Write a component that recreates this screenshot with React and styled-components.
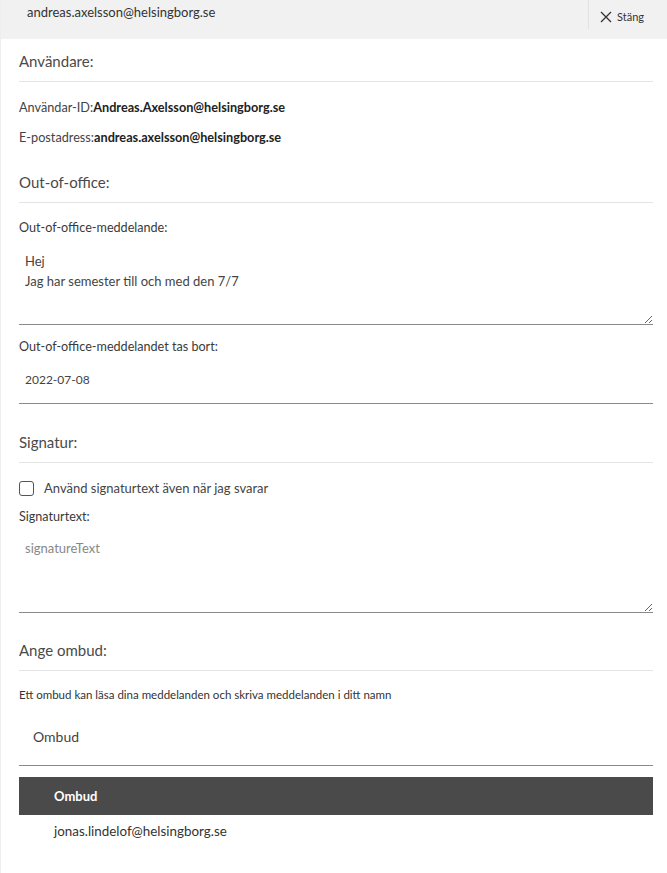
import React from "react";
import styled, { createGlobalStyle } from "styled-components";

const GlobalStyle = createGlobalStyle`
  body {
    margin: 0;
    background: #fff;
    font-family: Lato, "Open Sans", sans-serif;
    color: #333;
  }
  * { box-sizing: border-box; }
`;

const Panel = styled.div`
  width: 667px;
  min-height: 873px;
  background: #fff;
  border-left: 1px solid #eee;
`;

const Header = styled.div`
  height: 39px;
  background: #f1f1f1;
  display: flex;
  align-items: flex-start;
  justify-content: space-between;
`;

const HeaderTitle = styled.div`
  padding: 4px 0 0 26px;
  font-size: 13px;
  color: #333;
`;

const CloseButton = styled.button`
  height: 29px;
  width: 79px;
  border: none;
  border-left: 1px solid #e2e2e2;
  background: transparent;
  display: flex;
  align-items: center;
  gap: 5px;
  padding: 4px 0 0 11px;
  font-family: inherit;
  font-size: 11px;
  color: #333;
  cursor: pointer;
`;

const Body = styled.div`
  padding: 13px 14px 20px 18px;
  display: flex;
  flex-direction: column;
`;

const SectionTitle = styled.div`
  font-size: 15px;
  font-weight: 400;
  color: #4a4a4a;
  padding: ${(p) => p.$top || 0}px 0 11px;
  border-bottom: 1px solid #e3e3e3;
`;

const InfoRow = styled.div`
  font-size: 12.7px;
  color: #444;
  margin-top: ${(p) => p.$top}px;
  b {
    font-weight: 700;
    color: #222;
  }
`;

const Label = styled.div`
  font-size: 12.6px;
  color: #3a3a3a;
  margin-top: ${(p) => p.$top}px;
`;

const TextArea = styled.textarea`
  display: block;
  width: 100%;
  height: ${(p) => p.$height}px;
  margin-top: ${(p) => p.$top}px;
  border: none;
  border-bottom: 1px solid #8a8a8a;
  padding: 8px 6px;
  font-family: inherit;
  font-size: 13px;
  line-height: 20px;
  color: #444;
  outline: none;
  resize: vertical;
  &::placeholder {
    color: #888;
  }
`;

const Input = styled.input`
  display: block;
  width: 100%;
  height: ${(p) => p.$height}px;
  margin-top: ${(p) => p.$top}px;
  border: none;
  border-bottom: 1px solid #8a8a8a;
  padding: 0 ${(p) => p.$pad}px;
  font-family: inherit;
  font-size: ${(p) => p.$size}px;
  color: #444;
  outline: none;
  &::placeholder {
    color: #444;
  }
`;

const CheckRow = styled.label`
  display: flex;
  align-items: center;
  gap: 10px;
  margin-top: 17px;
  font-size: 13px;
  color: #444;
`;

const Box = styled.span`
  width: 15px;
  height: 15px;
  border: 1px solid #555;
  border-radius: 3px;
  background: #fff;
`;

const Hint = styled.div`
  font-size: 11.5px;
  color: #333;
  margin-top: 17px;
`;

const Table = styled.div`
  margin-top: 11px;
`;

const TableHead = styled.div`
  height: 38px;
  background: #4a4a4a;
  color: #fff;
  font-weight: 700;
  font-size: 13px;
  display: flex;
  align-items: center;
  padding-left: 35px;
`;

const TableRow = styled.div`
  padding: 8px 0 0 35px;
  font-size: 13.4px;
  color: #333;
`;

const CloseIcon = () => (
  <svg width="12" height="12" viewBox="0 0 12 12">
    <path d="M1 1L11 11M11 1L1 11" stroke="#333" strokeWidth="1.3" fill="none" />
  </svg>
);

export default function App() {
  return (
    <>
      <GlobalStyle />
      <Panel>
        <Header>
          <HeaderTitle>andreas.axelsson@helsingborg.se</HeaderTitle>
          <CloseButton>
            <CloseIcon />
            Stäng
          </CloseButton>
        </Header>
        <Body>
          <SectionTitle>Användare:</SectionTitle>
          <InfoRow $top={17}>
            Användar-ID:<b>Andreas.Axelsson@helsingborg.se</b>
          </InfoRow>
          <InfoRow $top={14}>
            E-postadress:<b>andreas.axelsson@helsingborg.se</b>
          </InfoRow>

          <SectionTitle $top={28}>Out-of-office:</SectionTitle>
          <Label $top={17}>Out-of-office-meddelande:</Label>
          <TextArea
            $top={8}
            $height={82}
            defaultValue={"Hej\nJag har semester till och med den 7/7"}
          />
          <Label $top={14}>Out-of-office-meddelandet tas bort:</Label>
          <Input $top={1} $height={49} $pad={6} $size={12} defaultValue="2022-07-08" />

          <SectionTitle $top={29}>Signatur:</SectionTitle>
          <CheckRow>
            <Box />
            Använd signaturtext även när jag svarar
          </CheckRow>
          <Label $top={13}>Signaturtext:</Label>
          <TextArea $top={6} $height={83} placeholder="signatureText" />

          <SectionTitle $top={28}>Ange ombud:</SectionTitle>
          <Hint>Ett ombud kan läsa dina meddelanden och skriva meddelanden i ditt namn</Hint>
          <Input $top={6} $height={59} $pad={14} $size={14} placeholder="Ombud" />
          <Table>
            <TableHead>Ombud</TableHead>
            <TableRow>jonas.lindelof@helsingborg.se</TableRow>
          </Table>
        </Body>
      </Panel>
    </>
  );
}
